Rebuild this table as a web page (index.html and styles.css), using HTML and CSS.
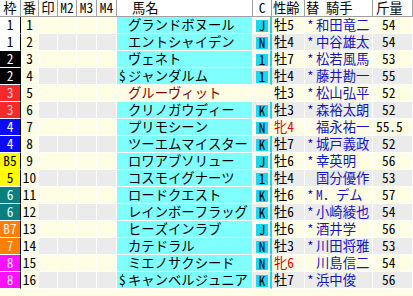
FILE: index.html
```html
<!DOCTYPE html>
<html lang="ja">
<head>
<meta charset="utf-8">
<title>出馬表</title>
<link rel="stylesheet" href="styles.css">
</head>
<body>
<div class="tbl">
  <div class="row head">
    <div class="c ctr">枠</div><div class="c ctr">番</div><div class="c ctr">印</div><div class="c ctr">M2</div><div class="c ctr">M3</div><div class="c ctr">M4</div><div class="c hn">馬名</div><div class="c ctr">C</div><div class="c hs">性齢</div><div class="c hj">替 騎手</div><div class="c hw">斤量</div>
  </div>

  <div class="row odd">
    <div class="c wk w1">1</div><div class="c no">1</div><div class="c m"></div><div class="c m"></div><div class="c m"></div><div class="c m"></div>
    <div class="c nm"><span class="pf"></span>グランドボヌール</div><div class="c cc st"><span class="bd">J</span></div>
    <div class="c sx">牡5</div><div class="c jk"><span class="jp">*</span>和田竜二</div><div class="c wt wi">54</div>
  </div>
  <div class="row even">
    <div class="c wk w1">1</div><div class="c no">2</div><div class="c m"></div><div class="c m"></div><div class="c m"></div><div class="c m"></div>
    <div class="c nm"><span class="pf"></span>エントシャイデン</div><div class="c cc st"><span class="bd">N</span></div>
    <div class="c sx">牡4</div><div class="c jk"><span class="jp">*</span>中谷雄太</div><div class="c wt wi">54</div>
  </div>
  <div class="row odd">
    <div class="c wk w2">2</div><div class="c no">3</div><div class="c m"></div><div class="c m"></div><div class="c m"></div><div class="c m"></div>
    <div class="c nm"><span class="pf"></span>ヴェネト</div><div class="c cc st"><span class="bd">1</span></div>
    <div class="c sx">牡7</div><div class="c jk"><span class="jp">*</span>松若風馬</div><div class="c wt wi">53</div>
  </div>
  <div class="row even">
    <div class="c wk w2">2</div><div class="c no">4</div><div class="c m"></div><div class="c m"></div><div class="c m"></div><div class="c m"></div>
    <div class="c nm"><span class="pf">$</span>ジャンダルム</div><div class="c cc st"><span class="bd">1</span></div>
    <div class="c sx">牡4</div><div class="c jk"><span class="jp">*</span>藤井勘一</div><div class="c wt wi">55</div>
  </div>
  <div class="row odd">
    <div class="c wk w3">3</div><div class="c no">5</div><div class="c m"></div><div class="c m"></div><div class="c m"></div><div class="c m"></div>
    <div class="c nm plain"><span class="pf"></span>グルーヴィット</div><div class="c cc"></div>
    <div class="c sx">牡3</div><div class="c jk"><span class="jp">*</span>松山弘平</div><div class="c wt wi">52</div>
  </div>
  <div class="row even">
    <div class="c wk w3">3</div><div class="c no">6</div><div class="c m"></div><div class="c m"></div><div class="c m"></div><div class="c m"></div>
    <div class="c nm"><span class="pf"></span>クリノガウディー</div><div class="c cc st"><span class="bd">K</span></div>
    <div class="c sx">牡3</div><div class="c jk"><span class="jp">*</span>森裕太朗</div><div class="c wt wi">52</div>
  </div>
  <div class="row odd">
    <div class="c wk w4">4</div><div class="c no">7</div><div class="c m"></div><div class="c m"></div><div class="c m"></div><div class="c m"></div>
    <div class="c nm"><span class="pf"></span>プリモシーン</div><div class="c cc"><span class="bd">N</span></div>
    <div class="c sx fm">牝4</div><div class="c jk"><span class="jp"></span>福永祐一</div><div class="c wt">55.5</div>
  </div>
  <div class="row even">
    <div class="c wk w4">4</div><div class="c no">8</div><div class="c m"></div><div class="c m"></div><div class="c m"></div><div class="c m"></div>
    <div class="c nm"><span class="pf"></span>ツーエムマイスター</div><div class="c cc st"><span class="bd">K</span></div>
    <div class="c sx">牡7</div><div class="c jk"><span class="jp">*</span>城戸義政</div><div class="c wt wi">52</div>
  </div>
  <div class="row odd">
    <div class="c wk w5">B5</div><div class="c no">9</div><div class="c m"></div><div class="c m"></div><div class="c m"></div><div class="c m"></div>
    <div class="c nm"><span class="pf"></span>ロワアブソリュー</div><div class="c cc st"><span class="bd">J</span></div>
    <div class="c sx">牡6</div><div class="c jk"><span class="jp">*</span>幸英明</div><div class="c wt wi">56</div>
  </div>
  <div class="row even">
    <div class="c wk w5">5</div><div class="c no">10</div><div class="c m"></div><div class="c m"></div><div class="c m"></div><div class="c m"></div>
    <div class="c nm"><span class="pf"></span>コスモイグナーツ</div><div class="c cc st"><span class="bd">1</span></div>
    <div class="c sx">牡4</div><div class="c jk"><span class="jp"></span>国分優作</div><div class="c wt wi">53</div>
  </div>
  <div class="row odd">
    <div class="c wk w6">6</div><div class="c no">11</div><div class="c m"></div><div class="c m"></div><div class="c m"></div><div class="c m"></div>
    <div class="c nm"><span class="pf"></span>ロードクエスト</div><div class="c cc st"><span class="bd">K</span></div>
    <div class="c sx">牡6</div><div class="c jk"><span class="jp">*</span>M．デム</div><div class="c wt wi">57</div>
  </div>
  <div class="row even">
    <div class="c wk w6">6</div><div class="c no">12</div><div class="c m"></div><div class="c m"></div><div class="c m"></div><div class="c m"></div>
    <div class="c nm"><span class="pf"></span>レインボーフラッグ</div><div class="c cc st"><span class="bd">K</span></div>
    <div class="c sx">牡6</div><div class="c jk"><span class="jp">*</span>小崎綾也</div><div class="c wt wi">54</div>
  </div>
  <div class="row odd">
    <div class="c wk w7">B7</div><div class="c no">13</div><div class="c m"></div><div class="c m"></div><div class="c m"></div><div class="c m"></div>
    <div class="c nm"><span class="pf"></span>ヒーズインラブ</div><div class="c cc st"><span class="bd">J</span></div>
    <div class="c sx">牡6</div><div class="c jk"><span class="jp">*</span>酒井学</div><div class="c wt wi">56</div>
  </div>
  <div class="row even">
    <div class="c wk w7">7</div><div class="c no">14</div><div class="c m"></div><div class="c m"></div><div class="c m"></div><div class="c m"></div>
    <div class="c nm"><span class="pf"></span>カテドラル</div><div class="c cc st"><span class="bd">N</span></div>
    <div class="c sx">牡3</div><div class="c jk"><span class="jp">*</span>川田将雅</div><div class="c wt wi">53</div>
  </div>
  <div class="row odd">
    <div class="c wk w8">8</div><div class="c no">15</div><div class="c m"></div><div class="c m"></div><div class="c m"></div><div class="c m"></div>
    <div class="c nm"><span class="pf"></span>ミエノサクシード</div><div class="c cc st"><span class="bd">N</span></div>
    <div class="c sx fm">牝6</div><div class="c jk"><span class="jp"></span>川島信二</div><div class="c wt wi">54</div>
  </div>
  <div class="row even">
    <div class="c wk w8">8</div><div class="c no">16</div><div class="c m"></div><div class="c m"></div><div class="c m"></div><div class="c m"></div>
    <div class="c nm"><span class="pf">$</span>キャンベルジュニア</div><div class="c cc st"><span class="bd">K</span></div>
    <div class="c sx">牡7</div><div class="c jk"><span class="jp">*</span>浜中俊</div><div class="c wt wi">56</div>
  </div>
</div>
</body>
</html>
```

FILE: styles.css
```css
* {
  box-sizing: border-box;
  margin: 0;
  padding: 0;
}

body {
  margin: 0;
  width: 413px;
  height: 296px;
  overflow: hidden;
  background: #fffde4;
  font-family: "Noto Sans Mono CJK JP", "Noto Sans CJK JP", sans-serif;
  font-size: 13.33px;
  color: #000;
}

.tbl {
  display: flex;
  flex-direction: column;
}

.row {
  display: grid;
  grid-template-columns: 21px 18px 19px 19px 20px 20px 136px 19px 33px 68px 40px;
  height: 17px;
}

.c {
  height: 17px;
  line-height: 16px;
  border-right: 1px solid #fff;
  border-bottom: 1px solid #fff;
  white-space: pre;
}

/* header */
.head {
  background: #fff;
}
.head .c {
  border-right-color: #a0a0a0;
  border-bottom-color: #a0a0a0;
}
.ctr { text-align: center; }
.hn { padding-left: 15px; }
.hs { padding-left: 1px; }
.hj { padding-left: 1px; }
.hw { padding-left: 3px; }

/* row backgrounds */
.odd .c { background: #fffde4; }
.even .c { background: #ebebeb; }
.even .no { background: #fffde4; }

/* 枠 */
.wk {
  text-align: center;
  border-right: 1px solid #000;
}
.row .w1 { background: #ffffff; color: #000; }
.row .w2 { background: #000000; color: #fff; }
.row .w3 { background: #f52a2a; color: #ffd0d0; }
.row .w4 { background: #0a0aff; color: #fff; }
.row .w5 { background: #ffff00; color: #000; }
.row .w6 { background: #0a7f80; color: #e6ffff; }
.row .w7 { background: #ff8000; color: #fff0e0; }
.row .w8 { background: #ff10ff; color: #ffe0ff; }

/* 番 */
.no { text-align: center; }

/* 馬名 */
.row .nm {
  background: #80ffff;
  padding-left: 2px;
}
.row .nm.plain {
  background: #fffde4;
  color: #800000;
}
.pf {
  display: inline-block;
  width: 9px;
}

/* C */
.cc {
  display: flex;
  align-items: flex-start;
  padding-top: 3px;
}
.cc.st {
  border-right: 2px solid #19d7ee;
}
.bd {
  display: block;
  width: 12px;
  height: 12px;
  margin-left: 3px;
  background: #19d7ee;
  line-height: 12px;
  text-align: center;
  font-size: 13px;
}

/* 性齢 */
.sx { padding-left: 2px; }
.fm { color: #e00000; }

/* 騎手 */
.jk {
  padding-left: 2px;
  color: #1414c0;
}
.jp {
  display: inline-block;
  width: 9px;
}

/* 斤量 */
.wt { padding-left: 3px; }
.wi { padding-left: 9px; }
```
